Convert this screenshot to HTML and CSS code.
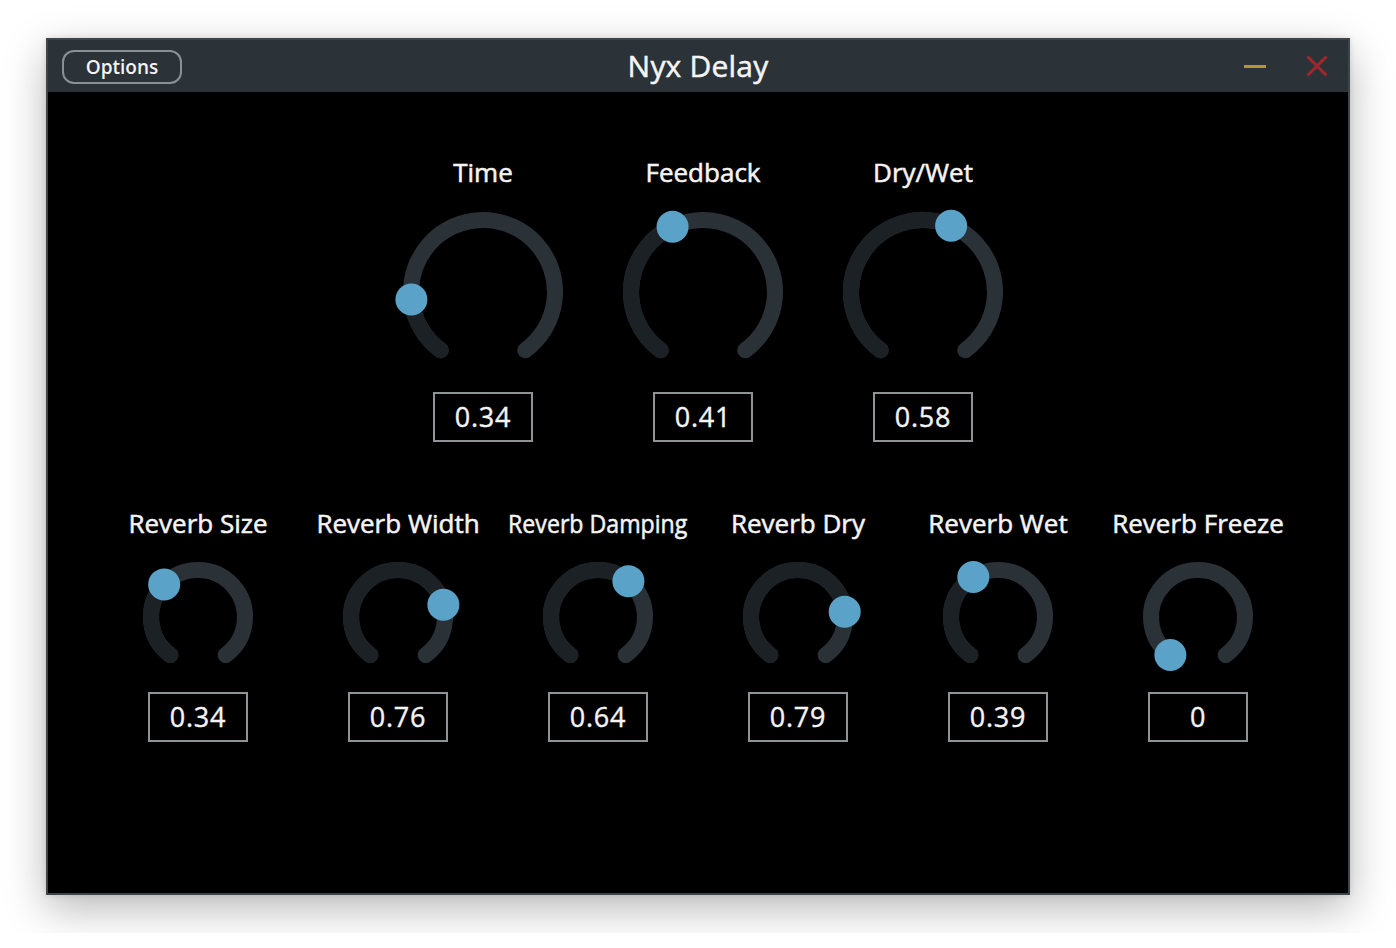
FILE: index.html
```html
<!DOCTYPE html>
<html>
<head>
<meta charset="utf-8">
<title>Nyx Delay</title>
<link rel="stylesheet" href="styles.css">
</head>
<body>
<div class="window">
  <div class="titlebar">
    <div class="tb-left"><button class="options">Options</button></div>
    <div class="title">Nyx Delay</div>
    <div class="tb-right">
      <span class="minimize"></span>
      <svg class="close" width="22" height="22" viewBox="0 0 22 22"><path d="M1.5 1.5 L20.5 20.5 M20.5 1.5 L1.5 20.5" stroke="#a3262a" stroke-width="3" fill="none"/></svg>
    </div>
  </div>
  <div class="content">
    <div class="row row-top">
      <div class="ctrl big">
        <div class="label">Time</div>
        <svg class="knob" width="180" height="180" viewBox="0 0 180 180">
          <path class="track" d="M47.68 148.25 A72 72 0 1 1 132.32 148.25"/>
          <path class="value" d="M47.68 148.25 A72 72 0 0 1 18.40 97.53"/>
          <circle class="thumb" cx="18.40" cy="97.53" r="16"/>
        </svg>
        <div class="box">0.34</div>
      </div>
      <div class="ctrl big">
        <div class="label">Feedback</div>
        <svg class="knob" width="180" height="180" viewBox="0 0 180 180">
          <path class="track" d="M47.68 148.25 A72 72 0 1 1 132.32 148.25"/>
          <path class="value" d="M47.68 148.25 A72 72 0 0 1 59.57 24.75"/>
          <circle class="thumb" cx="59.57" cy="24.75" r="16"/>
        </svg>
        <div class="box">0.41</div>
      </div>
      <div class="ctrl big">
        <div class="label">Dry/Wet</div>
        <svg class="knob" width="180" height="180" viewBox="0 0 180 180">
          <path class="track" d="M47.68 148.25 A72 72 0 1 1 132.32 148.25"/>
          <path class="value" d="M47.68 148.25 A72 72 0 0 1 118.13 23.72"/>
          <circle class="thumb" cx="118.13" cy="23.72" r="16"/>
        </svg>
        <div class="box">0.58</div>
      </div>
    </div>
    <div class="row row-bottom">
      <div class="ctrl small">
        <div class="label">Reverb Size</div>
        <svg class="knob" width="130" height="130" viewBox="0 0 130 130">
          <path class="track" d="M37.37 103.02 A47 47 0 1 1 92.63 103.02"/>
          <path class="value" d="M37.37 103.02 A47 47 0 0 1 31.15 32.40"/>
          <circle class="thumb" cx="31.15" cy="32.40" r="16"/>
        </svg>
        <div class="box">0.34</div>
      </div>
      <div class="ctrl small">
        <div class="label">Reverb Width</div>
        <svg class="knob" width="130" height="130" viewBox="0 0 130 130">
          <path class="track" d="M37.37 103.02 A47 47 0 1 1 92.63 103.02"/>
          <path class="value" d="M37.37 103.02 A47 47 0 1 1 110.37 52.74"/>
          <circle class="thumb" cx="110.37" cy="52.74" r="16"/>
        </svg>
        <div class="box">0.76</div>
      </div>
      <div class="ctrl small">
        <div class="label"><span class="squeeze">Reverb Damping</span></div>
        <svg class="knob" width="130" height="130" viewBox="0 0 130 130">
          <path class="track" d="M37.37 103.02 A47 47 0 1 1 92.63 103.02"/>
          <path class="value" d="M37.37 103.02 A47 47 0 1 1 95.41 29.17"/>
          <circle class="thumb" cx="95.41" cy="29.17" r="16"/>
        </svg>
        <div class="box">0.64</div>
      </div>
      <div class="ctrl small">
        <div class="label">Reverb Dry</div>
        <svg class="knob" width="130" height="130" viewBox="0 0 130 130">
          <path class="track" d="M37.37 103.02 A47 47 0 1 1 92.63 103.02"/>
          <path class="value" d="M37.37 103.02 A47 47 0 1 1 111.70 59.70"/>
          <circle class="thumb" cx="111.70" cy="59.70" r="16"/>
        </svg>
        <div class="box">0.79</div>
      </div>
      <div class="ctrl small">
        <div class="label">Reverb Wet</div>
        <svg class="knob" width="130" height="130" viewBox="0 0 130 130">
          <path class="track" d="M37.37 103.02 A47 47 0 1 1 92.63 103.02"/>
          <path class="value" d="M37.37 103.02 A47 47 0 0 1 40.32 25.00"/>
          <circle class="thumb" cx="40.32" cy="25.00" r="16"/>
        </svg>
        <div class="box">0.39</div>
      </div>
      <div class="ctrl small">
        <div class="label">Reverb Freeze</div>
        <svg class="knob" width="130" height="130" viewBox="0 0 130 130">
          <path class="track" d="M37.37 103.02 A47 47 0 1 1 92.63 103.02"/>
          <circle class="thumb" cx="37.37" cy="103.02" r="16"/>
        </svg>
        <div class="box">0</div>
      </div>
    </div>
  </div>
</div>
</body>
</html>
```

FILE: styles.css
```css
* { box-sizing: border-box; }

html, body {
  margin: 0;
  background: #ffffff;
}

body {
  padding: 38px 46px;
  font-family: "Open Sans", "DejaVu Sans", sans-serif;
  color: #f4f4f4;
}

.window {
  width: 1304px;
  height: 857px;
  border: 2px solid #3d454b;
  background: #000;
  display: flex;
  flex-direction: column;
  box-shadow: 0 14px 40px rgba(0, 0, 0, 0.28), 0 0 6px rgba(0, 0, 0, 0.12);
}

.titlebar {
  height: 52px;
  background: #2b3238;
  display: grid;
  grid-template-columns: 1fr auto 1fr;
  align-items: center;
  padding: 0 14px;
}

.tb-left { display: flex; align-items: center; }

.options {
  width: 120px;
  height: 34px;
  border: 2px solid #8b9094;
  border-radius: 12px;
  background: #2b3238;
  color: #f4f4f4;
  font-family: "Open Sans", "DejaVu Sans", sans-serif;
  font-size: 19px;
  font-weight: 600;
  padding: 0;
  margin-top: 1px;
}

.title {
  font-size: 30px;
  font-weight: 400;
  line-height: 40px;
  color: #f4f4f4;
  letter-spacing: 0.2px;
  -webkit-text-stroke: 0.5px #f4f4f4;
}

.tb-right {
  display: flex;
  justify-content: flex-end;
  align-items: center;
  gap: 40px;
  padding-right: 6px;
}

.minimize {
  display: block;
  width: 22px;
  height: 3px;
  background: #b8962f;
}

.close { display: block; }

.content {
  flex: 1;
  display: flex;
  flex-direction: column;
  padding-top: 62px;
}

.row {
  display: flex;
  justify-content: center;
}

.row-top { padding-left: 10px; }
.row-bottom { margin-top: 63px; }

.ctrl {
  display: flex;
  flex-direction: column;
  align-items: center;
}

.ctrl.big { width: 220px; }
.ctrl.small { width: 200px; }

.label {
  font-size: 26px;
  font-weight: 400;
  line-height: 36px;
  height: 36px;
  white-space: nowrap;
  -webkit-text-stroke: 0.55px #f4f4f4;
}

.squeeze {
  display: inline-block;
  transform: scaleX(0.89);
}

.knob { display: block; }
.big .knob { margin-top: 12px; }
.small .knob { margin-top: 11px; }

.track {
  fill: none;
  stroke: #2a3238;
  stroke-width: 16;
  stroke-linecap: round;
}

.value {
  fill: none;
  stroke: #1c2125;
  stroke-width: 16;
  stroke-linecap: round;
}

.thumb { fill: #5ba2c8; }

.box {
  width: 100px;
  height: 50px;
  border: 2px solid #8e9396;
  margin-top: 10px;
  display: flex;
  align-items: center;
  justify-content: center;
  padding-bottom: 2px;
  font-size: 27px;
  font-weight: 400;
  letter-spacing: 0.8px;
  -webkit-text-stroke: 0.4px #f4f4f4;
}
```
